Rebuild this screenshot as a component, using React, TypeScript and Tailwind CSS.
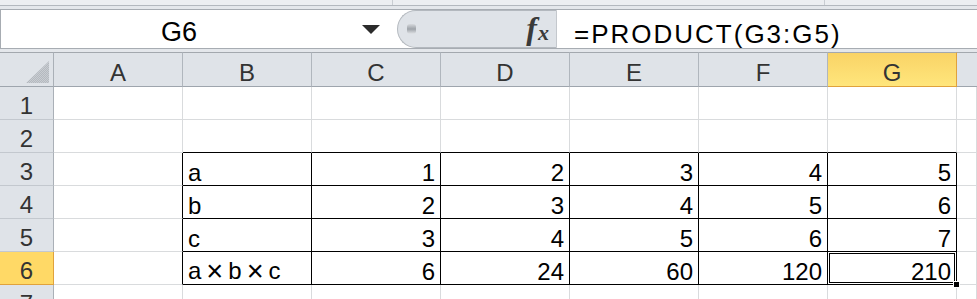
import React from 'react';

const COLS = ['A', 'B', 'C', 'D', 'E', 'F', 'G'];

const DATA: Record<number, (string | number)[]> = {
  3: ['a', 1, 2, 3, 4, 5],
  4: ['b', 2, 3, 4, 5, 6],
  5: ['c', 3, 4, 5, 6, 7],
  6: ['axbxc', 6, 24, 60, 120, 210],
};

function Corner() {
  return (
    <div className="relative h-[35px] border-t border-r border-b border-t-[#a3a8ae] border-r-[#aab0b7] border-b-[#9ea5ad] bg-[#dfe3e8]">
      <svg className="absolute left-0 top-0" width="53" height="33" viewBox="0 0 53 33">
        <defs>
          <pattern id="hatch" width="2" height="2" patternUnits="userSpaceOnUse">
            <rect width="2" height="2" fill="#c9cdd2" />
            <rect width="1" height="1" fill="#b4b9bf" />
            <rect x="1" y="1" width="1" height="1" fill="#b4b9bf" />
          </pattern>
        </defs>
        <polygon points="26,30 49,30 49,8" fill="url(#hatch)" />
      </svg>
    </div>
  );
}

function ColHeader({ label, selected }: { label: string; selected: boolean }) {
  return (
    <div
      className={
        selected
          ? 'flex h-[35px] items-end justify-center border-t border-r border-b border-t-[#a3a8ae] border-r-[#e0a23c] border-b-[#e0a23c] bg-gradient-to-b from-[#f9d366] to-[#ffe67c] text-[24px] leading-none text-[#333333]'
          : 'flex h-[35px] items-end justify-center border-t border-r border-b border-t-[#a3a8ae] border-r-[#b0b6bd] border-b-[#9ea5ad] bg-[#dfe3e8] text-[24px] leading-none text-[#333333]'
      }
    >
      <span className="pb-[1px]">{label}</span>
    </div>
  );
}

function RowHeader({ n, selected }: { n: number; selected: boolean }) {
  return (
    <div
      className={
        selected
          ? 'flex h-[33px] items-end justify-center border-r border-b border-r-[#e0a23c] border-b-[#e0a23c] bg-[#ffd966] text-[24px] leading-none text-[#333333]'
          : 'flex h-[33px] items-end justify-center border-r border-b border-r-[#aab0b7] border-b-[#c3c8ce] bg-[#dfe3e8] text-[24px] leading-none text-[#333333]'
      }
    >
      <span className="pb-[1px]">{n}</span>
    </div>
  );
}

function Times() {
  return <span className="relative top-[2px] mx-[5px] text-[29px] leading-none">×</span>;
}

function Cell({ r, c }: { r: number; c: number }) {
  // c: 1..7 => A..G, 8 => H
  const inTable = r >= 3 && r <= 6 && c >= 2 && c <= 7;
  const rightBlack = inTable || (c === 1 && r >= 3 && r <= 6);
  const bottomBlack = inTable || (r === 2 && c >= 2 && c <= 7);
  const val = inTable ? DATA[r][c - 2] : undefined;
  const isText = typeof val === 'string';
  const selected = r === 6 && c === 7;
  let content: React.ReactNode = null;
  if (val === 'axbxc') {
    content = (
      <span className="whitespace-pre">
        a<Times />b<Times />c
      </span>
    );
  } else if (val !== undefined) {
    content = <span className="whitespace-pre">{val}</span>;
  }
  return (
    <div
      className={
        'relative flex h-[33px] items-end border-r border-b text-[24px] leading-none text-black ' +
        (rightBlack ? 'border-r-black ' : 'border-r-[#d9dbdd] ') +
        (bottomBlack ? 'border-b-black ' : 'border-b-[#d9dbdd] ') +
        (isText ? 'justify-start pl-[5px]' : 'justify-end pr-[5px]')
      }
    >
      {content}
      {selected && (
        <>
          <div className="pointer-events-none absolute left-[-1px] top-[-1px] right-[-1px] bottom-[-1px] border-[3px] border-double border-black" />
          <div className="absolute right-[-4px] bottom-[-4px] z-10 h-[7px] w-[7px] border border-white bg-black" />
        </>
      )}
    </div>
  );
}

export default function App() {
  const rows = [1, 2, 3, 4, 5, 6, 7];
  return (
    <div className="h-[299px] w-[977px] overflow-hidden bg-white font-['Liberation_Sans',Arial,sans-serif]">
      {/* top ribbon edge */}
      <div className="flex h-[5px] bg-[#eceef1]">
        <div className="w-[393px] border-r border-[#c9cdd2]" />
        <div className="w-[432px] border-r border-[#c9cdd2]" />
        <div className="flex-1" />
      </div>
      <div className="h-px bg-[#b3b8be]" />
      <div className="h-[3px] bg-[#e4e7eb]" />

      {/* formula bar */}
      <div className="flex h-[40px] border-t border-b border-[#a7acb2] bg-white">
        {/* name box */}
        <div className="flex w-[397px] items-stretch border-l border-[#a7acb2]">
          <div className="flex w-[356px] items-end justify-center text-[27px] leading-none text-black">
            <span className="pb-[2px]">G6</span>
          </div>
          <div className="flex flex-1 items-center justify-center">
            <svg width="18" height="10" viewBox="0 0 18 10" className="ml-[-12px] mt-[1px]">
              <polygon points="0,0 18,0 9,9" fill="#2b2b2b" />
            </svg>
          </div>
        </div>
        {/* fx pill */}
        <div className="relative flex w-[160px] items-center rounded-l-[19px] border border-r border-[#b3b8be] border-r-[#c4c8cd] bg-[#dfe3e8]">
          <div className="ml-[9px] h-[10px] w-[9px] rounded-[3px] bg-gradient-to-b from-[#d6d9dd] via-[#9ea3a9] to-[#e2e5e8]" />
          <div className="ml-auto mr-[7px] flex items-end pb-[3px] font-['Liberation_Serif',serif] italic text-[#3a3a3a]">
            <span className="text-[32px] font-bold leading-none">f</span>
            <span className="ml-px text-[22px] font-bold leading-none">x</span>
          </div>
        </div>
        {/* formula input */}
        <div className="flex flex-1 items-end pl-[17px] text-[26px] leading-none tracking-[2px] text-black">
          <span className="pb-[1px]">=PRODUCT(G3:G5)</span>
        </div>
      </div>
      <div className="h-[3px] bg-[#e4e7eb]" />

      {/* sheet grid */}
      <div className="grid grid-cols-[54px_repeat(7,129px)_1fr]">
        <Corner />
        {COLS.map((c) => (
          <ColHeader key={c} label={c} selected={c === 'G'} />
        ))}
        <div className="h-[35px] border-t border-b border-t-[#a3a8ae] border-b-[#9ea5ad] bg-[#dfe3e8]" />
        {rows.map((r) => (
          <React.Fragment key={r}>
            <RowHeader n={r} selected={r === 6} />
            {[1, 2, 3, 4, 5, 6, 7, 8].map((c) => (
              <Cell key={c} r={r} c={c} />
            ))}
          </React.Fragment>
        ))}
      </div>
    </div>
  );
}
